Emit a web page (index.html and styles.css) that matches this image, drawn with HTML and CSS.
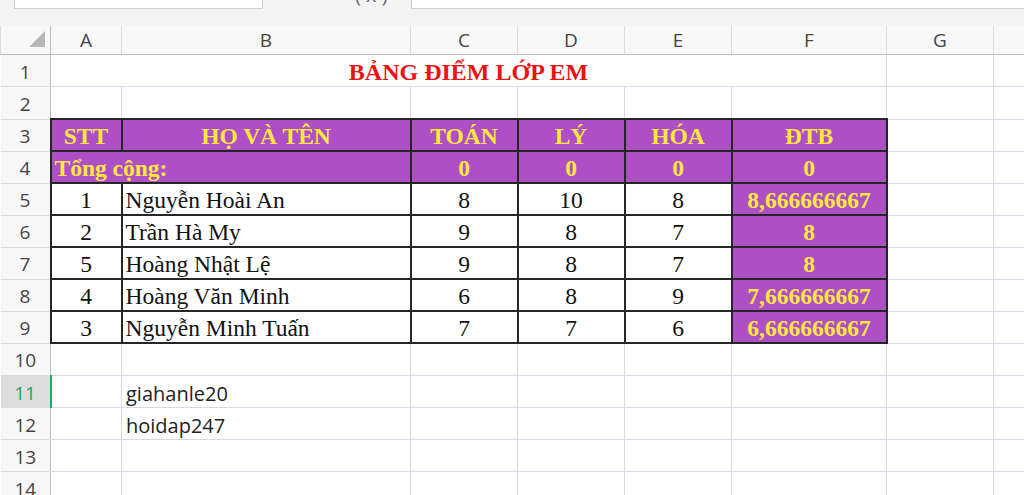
FILE: index.html
```html
<!DOCTYPE html>
<html lang="vi">
<head>
    <meta charset="UTF-8" />
    <meta name="viewport" content="width=device-width, initial-scale=1.0" />
    <title>Bảng điểm lớp em</title>
    <link rel="stylesheet" href="styles.css">
</head>
<body>
<div class="formula-bar">
    <div class="name-box"></div>
    <div class="fx">( x )</div>
    <div class="formula-input"></div>
</div>

<table class="sheet">
    <colgroup>
        <col class="c-head"><col class="c-a"><col class="c-b"><col class="c-num"><col class="c-num">
        <col class="c-num"><col class="c-f"><col class="c-num"><col class="c-num">
    </colgroup>
    <thead>
    <tr class="col-heads">
        <th class="corner">
            <svg width="50" height="28" viewBox="0 0 50 28"><polygon points="44,5 44,21 28,21" fill="#b7b7b7"/></svg>
        </th>
        <th>A</th><th>B</th><th>C</th><th>D</th><th>E</th><th>F</th><th>G</th><th></th>
    </tr>
    </thead>
    <tbody>
    <tr>
        <th class="row-head">1</th>
        <td colspan="6" class="serif title">BẢNG ĐIỂM LỚP EM</td>
        <td></td><td></td>
    </tr>
    <tr>
        <th class="row-head">2</th>
        <td></td><td></td><td></td><td></td><td></td><td></td><td></td><td></td>
    </tr>
    <tr>
        <th class="row-head">3</th>
        <td class="serif box hl center">STT</td>
        <td class="serif box hl center">HỌ VÀ TÊN</td>
        <td class="serif box hl center">TOÁN</td>
        <td class="serif box hl center">LÝ</td>
        <td class="serif box hl center">HÓA</td>
        <td class="serif box hl center">ĐTB</td>
        <td></td><td></td>
    </tr>
    <tr>
        <th class="row-head">4</th>
        <td colspan="2" class="serif box hl total">Tổng cộng:</td>
        <td class="serif box hl center">0</td>
        <td class="serif box hl center">0</td>
        <td class="serif box hl center">0</td>
        <td class="serif box hl center">0</td>
        <td></td><td></td>
    </tr>
    <tr>
        <th class="row-head">5</th>
        <td class="serif box center">1</td>
        <td class="serif box name">Nguyễn Hoài An</td>
        <td class="serif box center">8</td>
        <td class="serif box center">10</td>
        <td class="serif box center">8</td>
        <td class="serif box hl center">8,666666667</td>
        <td></td><td></td>
    </tr>
    <tr>
        <th class="row-head">6</th>
        <td class="serif box center">2</td>
        <td class="serif box name">Trần Hà My</td>
        <td class="serif box center">9</td>
        <td class="serif box center">8</td>
        <td class="serif box center">7</td>
        <td class="serif box hl center">8</td>
        <td></td><td></td>
    </tr>
    <tr>
        <th class="row-head">7</th>
        <td class="serif box center">5</td>
        <td class="serif box name">Hoàng Nhật Lệ</td>
        <td class="serif box center">9</td>
        <td class="serif box center">8</td>
        <td class="serif box center">7</td>
        <td class="serif box hl center">8</td>
        <td></td><td></td>
    </tr>
    <tr>
        <th class="row-head">8</th>
        <td class="serif box center">4</td>
        <td class="serif box name">Hoàng Văn Minh</td>
        <td class="serif box center">6</td>
        <td class="serif box center">8</td>
        <td class="serif box center">9</td>
        <td class="serif box hl center">7,666666667</td>
        <td></td><td></td>
    </tr>
    <tr>
        <th class="row-head">9</th>
        <td class="serif box center">3</td>
        <td class="serif box name">Nguyễn Minh Tuấn</td>
        <td class="serif box center">7</td>
        <td class="serif box center">7</td>
        <td class="serif box center">6</td>
        <td class="serif box hl center">6,666666667</td>
        <td></td><td></td>
    </tr>
    <tr>
        <th class="row-head">10</th>
        <td></td><td></td><td></td><td></td><td></td><td></td><td></td><td></td>
    </tr>
    <tr>
        <th class="row-head active">11</th>
        <td></td><td class="plain">giahanle20</td><td></td><td></td><td></td><td></td><td></td><td></td>
    </tr>
    <tr>
        <th class="row-head">12</th>
        <td></td><td class="plain">hoidap247</td><td></td><td></td><td></td><td></td><td></td><td></td>
    </tr>
    <tr>
        <th class="row-head">13</th>
        <td></td><td></td><td></td><td></td><td></td><td></td><td></td><td></td>
    </tr>
    <tr>
        <th class="row-head">14</th>
        <td></td><td></td><td></td><td></td><td></td><td></td><td></td><td></td>
    </tr>
    </tbody>
</table>
</body>
</html>
```

FILE: styles.css
```css
body {
    margin: 0;
    padding: 0;
    overflow: hidden;
    background-color: #ffffff;
    font-family: "Open Sans", "Liberation Sans", sans-serif;
}

/* strip above the grid (name box + formula input, mostly scrolled away) */
.formula-bar {
    display: flex;
    height: 26px;
    background-color: #f3f3f3;
}
.name-box {
    width: 247px;
    height: 8px;
    margin-left: 14px;
    background-color: #ffffff;
    border: 1px solid #d0d0d0;
    border-top: none;
}
.fx {
    width: 148px;
    box-sizing: border-box;
    padding-left: 92px;
    margin-top: -15px;
    height: 20px;
    font-size: 20px;
    line-height: 20px;
    color: #6a6a6a;
    white-space: nowrap;
}
.formula-input {
    flex: 1;
    height: 8px;
    background-color: #ffffff;
    border: 1px solid #d0d0d0;
    border-top: none;
    border-right: none;
}

/* grid */
.sheet {
    border-collapse: collapse;
    table-layout: fixed;
    width: 1100px;
}
.c-head { width: 50px; }
.c-a { width: 71px; }
.c-b { width: 289px; }
.c-num { width: 107px; }
.c-f { width: 155px; }

.sheet td,
.sheet th {
    height: 31px;
    padding: 0;
    border: 1px solid #d7d7e5;
    white-space: nowrap;
    overflow: hidden;
}

.col-heads th {
    height: 27px;
    background-color: #f7f7f7;
    border-top: none;
    border-color: #dadada;
    border-bottom: 1px solid #bdbdbd;
    font-size: 19px;
    font-weight: normal;
    color: #444444;
    vertical-align: middle;
}
.col-heads th.corner {
    border-right: 1px solid #bdbdbd;
}
.corner svg {
    display: block;
}

.sheet th.row-head {
    height: 29px;
    background-color: #f7f7f7;
    border-left: none;
    border-color: #dcdcdc;
    border-right: 1px solid #bdbdbd;
    font-size: 19px;
    font-weight: normal;
    color: #444444;
    padding-top: 2px;
}
.sheet th.row-head.active {
    background-color: #dcdcdc;
    color: #21a366;
    border-right: 2px solid #21a366;
}

/* cell formats */
.serif {
    font-family: "Liberation Serif", "Times New Roman", serif;
    font-size: 23.5px;
    color: #111111;
    vertical-align: bottom;
}
.title {
    text-align: center;
    font-weight: bold;
    color: #ee1111;
    font-size: 24px;
}
.sheet td.box {
    height: 30px;
    border: 2px solid #262626;
}
.hl {
    background-color: #ae4fc6;
    color: #ffe83e;
    font-weight: bold;
}
.center {
    text-align: center;
}
.sheet td.name {
    padding-left: 3px;
}
.sheet td.total {
    padding-left: 3px;
}
.sheet td.plain {
    font-size: 20px;
    color: #222222;
    padding-left: 4px;
    vertical-align: bottom;
}
```
